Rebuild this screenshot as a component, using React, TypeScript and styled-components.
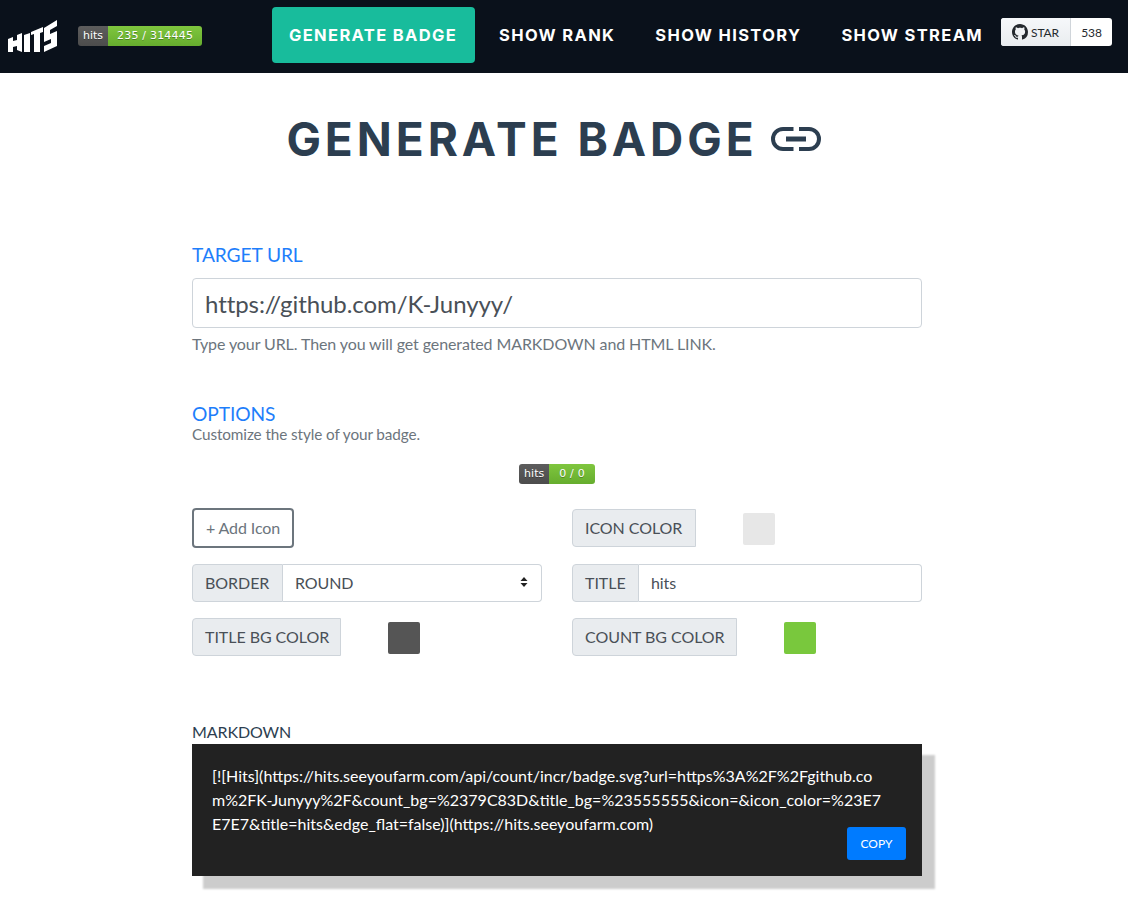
import React from "react";
import styled, { createGlobalStyle } from "styled-components";

const Global = createGlobalStyle`
  html, body { margin: 0; padding: 0; background: #fff; }
  body { font-family: Lato, "Liberation Sans", sans-serif; font-size: 16px; color: #2c3e50; letter-spacing: -0.1px; }
  * { box-sizing: border-box; }
`;

const Nav = styled.nav`
  height: 73px;
  background: #0a111b;
  display: flex;
  align-items: center;
  padding: 0 16px 3px 8px;
`;
const Brand = styled.div`
  flex: 0 0 264px;
  display: flex;
  align-items: center;
  gap: 18px;
`;
const Badge = styled.div`
  display: inline-flex;
  height: 20px;
  border-radius: 3px;
  overflow: hidden;
  font-family: "DejaVu Sans", sans-serif;
  font-size: 11px;
  line-height: 20px;
  letter-spacing: 0;
  color: #fff;
  text-shadow: 0 1px 0 rgba(1,1,1,.3);
`;
const NavBadge = styled(Badge)`
  margin-top: 2px;
`;
const BadgeTitle = styled.span`
  background: linear-gradient(#5d5d5d, #4c4c4c);
  padding: 0 5px;
`;
const BadgeCount = styled.span`
  background: linear-gradient(#7fc63e, #66ad2e);
  padding: 0 9px;
  letter-spacing: 0.2px;
  white-space: pre;
`;
const PreviewCount = styled(BadgeCount)`
  padding: 0 10px;
`;
const Menu = styled.div`
  display: flex;
  align-items: center;
  flex: 1;
  min-width: 0;
`;
const MenuItem = styled.a<{ $active?: boolean }>`
  height: 56px;
  display: flex;
  align-items: center;
  padding: ${(p) => (p.$active ? "0 18px 0 17px" : "0 20px")};
  margin-right: ${(p) => (p.$active ? "4px" : "0")};
  border-radius: 4px;
  background: ${(p) => (p.$active ? "#18bc9c" : "transparent")};
  color: #fff;
  font-family: Inter, "Open Sans", sans-serif;
  font-weight: 700;
  font-size: 16.5px;
  letter-spacing: 1.35px;
  white-space: nowrap;
`;
const Star = styled.div`
  display: flex;
  flex: none;
  align-self: flex-start;
  margin-top: 18px;
  height: 28px;
  border-radius: 3px;
  overflow: hidden;
  font-size: 12px;
  background: #fff;
  color: #24292e;
`;
const StarLeft = styled.div`
  display: flex;
  align-items: center;
  gap: 3px;
  width: 70px;
  padding-left: 11px;
  background: linear-gradient(#f6f8fa, #e9ecef);
  border-right: 1px solid #d0d5da;
`;
const StarCount = styled.div`
  width: 41px;
  display: flex;
  align-items: center;
  justify-content: center;
`;

const Title = styled.h1`
  margin: 0;
  height: 170px;
  padding: 38px 21px 0 0;
  display: flex;
  justify-content: center;
  align-items: flex-start;
  gap: 13px;
  font-family: Inter, "Open Sans", sans-serif;
  font-size: 46px;
  line-height: 56px;
  font-weight: 700;
  letter-spacing: 3.95px;
  color: #2c3e50;
  svg { margin-top: 14px; }
`;
const Container = styled.main`
  width: 730px;
  margin-left: 192px;
  padding-bottom: 25px;
`;
const SectionLabel = styled.div`
  color: #1e7efb;
  font-size: 19.2px;
  line-height: 24px;
`;
const OptionsLabel = styled(SectionLabel)`
  margin-top: 49px;
  line-height: 23px;
`;
const UrlField = styled.div`
  height: 50px;
  margin-top: 11px;
  border: 1px solid #ced4da;
  border-radius: 4px;
  padding: 0 12px;
  display: flex;
  align-items: center;
  font-size: 24px;
  letter-spacing: -0.07px;
  color: #495057;
`;
const Help = styled.div`
  color: #6c757d;
  font-size: 15.3px;
  line-height: 19px;
`;
const UrlHelp = styled(Help)`
  margin-top: 6px;
  font-size: 16px;
`;
const Preview = styled.div`
  display: flex;
  justify-content: center;
  margin-top: 20px;
`;
const Grid = styled.div`
  display: grid;
  grid-template-columns: 350px 350px;
  column-gap: 30px;
  row-gap: 16px;
  margin-top: 25px;
`;
const Outline = styled.div`
  width: 102px;
  height: 40px;
  margin-top: -1px;
  padding-bottom: 1px;
  border: 2px solid #6c757d;
  border-radius: 4px;
  color: #6c757d;
  display: flex;
  align-items: center;
  justify-content: center;
`;
const Group = styled.div`
  display: flex;
  height: 38px;
  align-items: stretch;
`;
const Addon = styled.div<{ $w: number }>`
  flex: none;
  width: ${(p) => p.$w}px;
  display: flex;
  align-items: center;
  padding: 0 0 2px 12px;
  background: #e9ecef;
  border: 1px solid #ced4da;
  border-radius: 4px 0 0 4px;
  color: #495057;
  letter-spacing: -0.05px;
  white-space: nowrap;
`;
const Control = styled.div`
  flex: 1;
  display: flex;
  align-items: center;
  justify-content: space-between;
  padding: 0 12px 2px;
  border: 1px solid #ced4da;
  border-left: 0;
  border-radius: 0 4px 4px 0;
  color: #495057;
`;
const Swatch = styled.div<{ $c: string }>`
  width: 32px;
  height: 32px;
  border-radius: 2px;
  margin: 4px 0 0 47px;
  background: ${(p) => p.$c};
`;
const MdLabel = styled.div`
  margin: 66px 0 3px;
  font-size: 16px;
  line-height: 19px;
  color: #2c3e50;
`;
const Code = styled.div`
  position: relative;
  height: 132px;
  background: #222;
  box-shadow: 12px 12px 2px 1px rgba(0,0,0,.2);
  padding: 20px 38px 20px 20px;
  color: #fff;
  font-size: 16px;
  line-height: 24px;
  letter-spacing: 0;
  word-break: break-all;
`;
const Copy = styled.div`
  position: absolute;
  right: 16px;
  bottom: 16px;
  width: 59px;
  height: 33px;
  border-radius: 3px;
  background: #007bff;
  color: #fff;
  font-size: 12px;
  display: flex;
  align-items: center;
  justify-content: center;
`;

const Logo = () => (
  <svg width="52" height="36" viewBox="0 0 52 36" fill="#fff">
    <polygon points="0,22 5,20 5,24 9,23 9,18 14,16 14,35 9,33 9,29 5,30 5,35 0,35" />
    <polygon points="16,18 22,16 22,35 16,35" />
    <polygon points="23,15 35,10 35,15 32,16 32,35 26,35 26,17 23,18" />
    <polygon points="36,11 49,3 49,9 42,13 42,17 49,14 49,29 36,35 36,29 43,26 43,22 36,25" />
  </svg>
);
const LinkIcon = () => (
  <svg width="50" height="28" viewBox="0 0 50 28" fill="none" stroke="#2c3e50" strokeWidth="4">
    <path d="M22.5 4H12a10 10 0 0 0 0 20h10.5" />
    <path d="M28 4h10a10 10 0 0 1 0 20H28" />
    <path d="M15 14h20" strokeWidth="5" />
  </svg>
);
const GitHub = () => (
  <svg width="16" height="16" viewBox="0 0 16 16" fill="#24292e">
    <path d="M8 0C3.58 0 0 3.58 0 8c0 3.54 2.29 6.53 5.47 7.59.4.07.55-.17.55-.38 0-.19-.01-.82-.01-1.49-2.01.37-2.53-.49-2.69-.94-.09-.23-.48-.94-.82-1.13-.28-.15-.68-.52-.01-.53.63-.01 1.08.58 1.23.82.72 1.21 1.87.87 2.33.66.07-.52.28-.87.51-1.07-1.78-.2-3.64-.89-3.64-3.95 0-.87.31-1.59.82-2.15-.08-.2-.36-1.02.08-2.12 0 0 .67-.21 2.2.82.64-.18 1.32-.27 2-.27s1.36.09 2 .27c1.53-1.04 2.2-.82 2.2-.82.44 1.1.16 1.92.08 2.12.51.56.82 1.27.82 2.15 0 3.07-1.87 3.75-3.65 3.95.29.25.54.73.54 1.48 0 1.07-.01 1.93-.01 2.2 0 .21.15.46.55.38A8.01 8.01 0 0 0 16 8c0-4.42-3.58-8-8-8z" />
  </svg>
);
const Arrows = () => (
  <svg width="10" height="12" viewBox="0 0 10 12" fill="#222">
    <path d="M5 1l3.5 4h-7zM5 11L1.5 7h7z" />
  </svg>
);

export default function App() {
  return (
    <>
      <Global />
      <Nav>
        <Brand>
          <Logo />
          <NavBadge>
            <BadgeTitle>hits</BadgeTitle>
            <BadgeCount>235 / 314445</BadgeCount>
          </NavBadge>
        </Brand>
        <Menu>
          <MenuItem $active>GENERATE BADGE</MenuItem>
          <MenuItem>SHOW RANK</MenuItem>
          <MenuItem>SHOW HISTORY</MenuItem>
          <MenuItem>SHOW STREAM</MenuItem>
        </Menu>
        <Star>
          <StarLeft><GitHub />STAR</StarLeft>
          <StarCount>538</StarCount>
        </Star>
      </Nav>
      <Title>GENERATE BADGE <LinkIcon /></Title>
      <Container>
        <SectionLabel>TARGET URL</SectionLabel>
        <UrlField>https://github.com/K-Junyyy/</UrlField>
        <UrlHelp>Type your URL. Then you will get generated MARKDOWN and HTML LINK.</UrlHelp>
        <OptionsLabel>OPTIONS</OptionsLabel>
        <Help>Customize the style of your badge.</Help>
        <Preview>
          <Badge>
            <BadgeTitle>hits</BadgeTitle>
            <PreviewCount>0 / 0</PreviewCount>
          </Badge>
        </Preview>
        <Grid>
          <Outline>+ Add Icon</Outline>
          <Group><Addon $w={124}>ICON COLOR</Addon><Swatch $c="#e7e7e7" /></Group>
          <Group><Addon $w={91}>BORDER</Addon><Control>ROUND<Arrows /></Control></Group>
          <Group><Addon $w={67}>TITLE</Addon><Control>hits</Control></Group>
          <Group><Addon $w={149}>TITLE BG COLOR</Addon><Swatch $c="#555555" /></Group>
          <Group><Addon $w={165}>COUNT BG COLOR</Addon><Swatch $c="#79c83d" /></Group>
        </Grid>
        <MdLabel>MARKDOWN</MdLabel>
        <Code>
          [![Hits](https://hits.seeyoufarm.com/api/count/incr/badge.svg?url=https%3A%2F%2Fgithub.com%2FK-Junyyy%2F&count_bg=%2379C83D&title_bg=%23555555&icon=&icon_color=%23E7E7E7&title=hits&edge_flat=false)](https://hits.seeyoufarm.com)
          <Copy>COPY</Copy>
        </Code>
      </Container>
    </>
  );
}
